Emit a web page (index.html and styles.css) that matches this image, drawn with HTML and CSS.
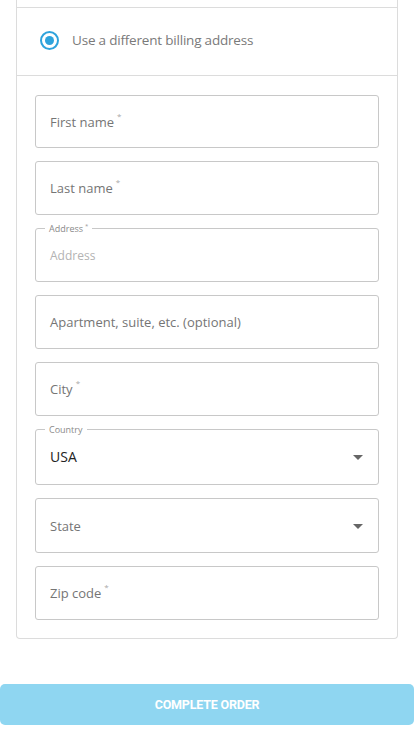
FILE: index.html
```html
<!DOCTYPE html>
<html lang="en">
<head>
<meta charset="utf-8">
<title>Billing address</title>
<link rel="stylesheet" href="styles.css">
</head>
<body>
<div class="page">
  <div class="card">
    <div class="prev-row"></div>
    <label class="radio-row">
      <span class="radio"><span class="radio-dot"></span></span>
      <span class="radio-label">Use a different billing address</span>
    </label>
    <div class="fields">
      <div class="field first"><span class="ph">First name<sup class="req">*</sup></span></div>
      <div class="field"><span class="ph">Last name<sup class="req">*</sup></span></div>
      <div class="field float"><span class="flabel">Address<sup class="req">*</sup></span><span class="ph light">Address</span></div>
      <div class="field"><span class="ph">Apartment, suite, etc. (optional)</span></div>
      <div class="field"><span class="ph">City<sup class="req">*</sup></span></div>
      <div class="field float select tall"><span class="flabel">Country</span><span class="value">USA</span><span class="caret"></span></div>
      <div class="field select mid"><span class="ph">State</span><span class="caret"></span></div>
      <div class="field"><span class="ph">Zip code<sup class="req">*</sup></span></div>
    </div>
  </div>
  <div class="actions">
    <button class="btn">COMPLETE ORDER</button>
  </div>
</div>
</body>
</html>
```
FILE: styles.css
```css
* { box-sizing: border-box; }
html, body { margin: 0; padding: 0; background: #fff; }
body { font-family: "Open Sans", "Liberation Sans", sans-serif; color: #6f6f6f; }
.page { width: 414px; }
.card {
  margin: 0 16px 0 16px;
  width: 382px;
  border: 1px solid #dcdcdc;
  border-top: none;
  border-radius: 0 0 4px 4px;
}
.prev-row { height: 8px; border-bottom: 1px solid #dcdcdc; }
.radio-row {
  display: flex;
  align-items: center;
  height: 68px;
  padding-left: 23px;
  padding-bottom: 3px;
  border-bottom: 1px solid #dcdcdc;
}
.radio {
  width: 19px; height: 19px;
  border: 2.5px solid #2ea3dc;
  border-radius: 50%;
  display: flex; align-items: center; justify-content: center;
  margin-right: 13px;
}
.radio-dot { width: 9px; height: 9px; border-radius: 50%; background: #2ea3dc; }
.radio-label { font-size: 13.5px; color: #7a7a7a; letter-spacing: -0.2px; }
.fields {
  padding: 19px 18px 18px 18px;
  display: flex; flex-direction: column; gap: 13px;
}
.field {
  position: relative;
  height: 54px;
  border: 1px solid #c8c8c8;
  border-radius: 3px;
  display: flex; align-items: center;
  padding: 0 14px;
  font-size: 13px;
}
.field.first { height: 53px; }
.field.tall { height: 56px; }
.field.mid { height: 55px; }
.ph { color: #757575; }
.ph.light { color: #b3b3b3; font-size: 12px; margin-top: 1px; }
.req { font-size: 8px; color: #a8a8a8; vertical-align: top; position: relative; top: -3px; margin-left: 3px; }
.float .flabel {
  position: absolute;
  top: -6px; left: 9px;
  background: #fff;
  padding: 0 4px;
  font-size: 9px;
  line-height: 11px;
  color: #8a8a8a;
}
.float .flabel .req { font-size: 6px; top: -2px; margin-left: 2px; color: #999; }
.value { color: #222; font-size: 14px; margin-top: -2px; }
.select .caret {
  position: absolute;
  right: 15px; top: 50%;
  margin-top: -2px;
  width: 0; height: 0;
  border-left: 5px solid transparent;
  border-right: 5px solid transparent;
  border-top: 5px solid #666;
}
.actions { padding-top: 45px; }
.btn {
  display: block;
  width: 414px;
  height: 41px;
  border: none;
  border-radius: 5px;
  background: #8fd6f1;
  color: #fff;
  font-family: Roboto, "Liberation Sans", sans-serif;
  font-weight: 700;
  font-size: 12.5px;
  letter-spacing: -0.2px;
  padding-bottom: 2px;
}
```
